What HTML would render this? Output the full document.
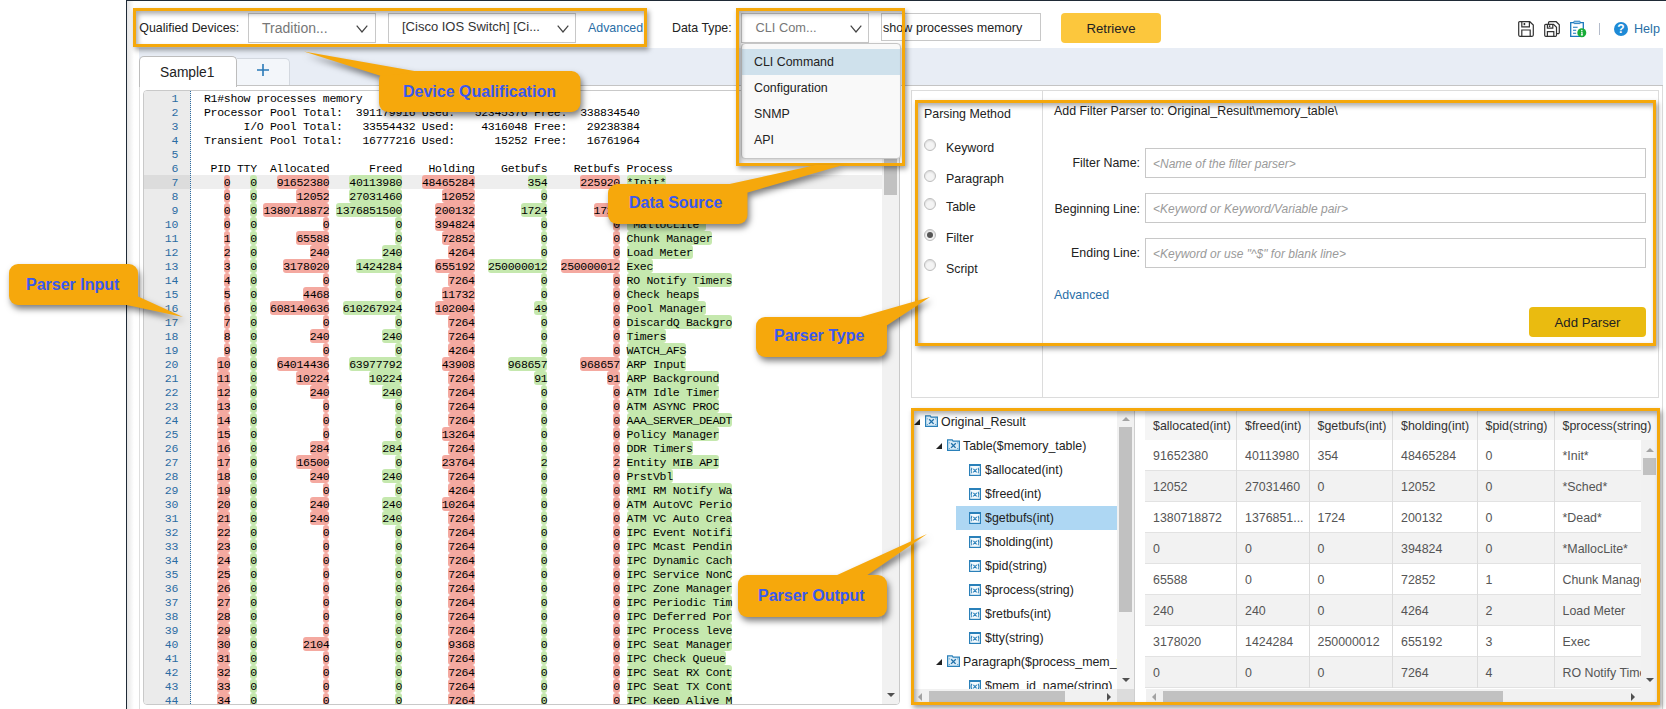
<!DOCTYPE html>
<html><head><meta charset="utf-8"><title>Parser</title>
<style>
html,body{margin:0;padding:0}
body{width:1666px;height:709px;overflow:hidden;background:#fff;position:relative;font-family:"Liberation Sans",sans-serif;font-size:12.4px;color:#222}
.abs{position:absolute}
.t{position:absolute;white-space:nowrap;line-height:16px}
.sel1{position:absolute;box-sizing:border-box;border:1px solid #c8c8c8;background:#fff;height:30px;top:13px}
.sel1 .v{position:absolute;top:5px;font-size:14px;line-height:18px;white-space:nowrap}
.obox{position:absolute;box-sizing:border-box;border:3px solid #f5a80b;box-shadow:2px 3px 5px rgba(0,0,0,.38), inset 2px 3px 5px rgba(0,0,0,.33);pointer-events:none}
.link{color:#2a6ea6}
#tabs{position:absolute;left:139px;top:48px;width:1524px;height:37px;background:#e8edf5;border-bottom:1px solid #c4c4c4}
#tab1{position:absolute;left:139px;top:56px;width:98px;height:31px;box-sizing:border-box;background:#fff;border:1px solid #bdbdbd;border-bottom:none;border-radius:5px 5px 0 0;font-size:13.8px;line-height:18px}
#tab2{position:absolute;left:237px;top:58px;width:53px;height:27px;box-sizing:border-box;background:#f3f6fa;border:1px solid #d3d8df;border-bottom:none;border-left:none;border-radius:0 5px 0 0}
#editor{position:absolute;left:143px;top:90px;width:757px;height:615px;box-sizing:border-box;border:1px solid #c9c9c9;border-radius:4px;background:#fff;overflow:hidden}
#gutter{position:absolute;left:0;top:0;width:46px;height:100%;background:#ebebeb;border-right:1px dotted #2b6ca3}
#code{position:absolute;left:0;top:1px;width:589px;height:100%;overflow:hidden;background:transparent;font-family:"Liberation Mono",monospace;font-size:11.5px;letter-spacing:-0.3px;line-height:14px;color:#000;white-space:pre}
.ln{position:relative;height:14px;padding-left:60px}
.ln b{position:absolute;left:0;top:0;width:34px;text-align:right;font-weight:normal;color:#2b6ca3}
.ln.cur{background:transparent}
.ln.cur b{background:transparent}
.ln i{font-style:normal;display:inline-block;height:14px;line-height:14px;vertical-align:top;position:relative;z-index:0}
.ln i:before{content:"";position:absolute;left:0;right:0;top:-1px;height:14px;border-radius:3px;z-index:-1}
.ln i.p:before{background:#f4a9a0}
.ln i.g:before{background:#c5e8ae}
.sb{position:absolute;background:#f1f1f1}
.th1{position:absolute;background:#c1c1c1}
.aru,.ard,.arl,.arr{position:absolute;width:0;height:0;border:4px solid transparent}
.aru{border-bottom:4px solid #505050;border-top:none}
.ard{border-top:4px solid #505050;border-bottom:none}
.arl{border-right:4px solid #505050;border-left:none}
.arr{border-left:4px solid #505050;border-right:none}
.aru.lt{border-bottom-color:#a3a3a3}
.arl.lt{border-right-color:#a3a3a3}
#rp{position:absolute;left:911px;top:90px;width:748px;height:308px;box-sizing:border-box;border:1px solid #dcdcdc;background:#fff}
.radio{position:absolute;width:12px;height:12px;box-sizing:border-box;border:1px solid #bdbdbd;border-radius:50%;background:#f4f4f4;box-shadow:inset 0 1px 2px rgba(0,0,0,.12)}
.radio.on:after{content:"";position:absolute;left:2px;top:2px;width:6px;height:6px;border-radius:50%;background:#555}
.inp{position:absolute;left:1145px;width:501px;height:30px;box-sizing:border-box;border:1px solid #c8c8c8;background:#fff}
.ph{position:absolute;left:7px;top:7px;font-style:italic;color:#9a9a9a;font-size:12px;line-height:16px;white-space:nowrap}
.btn{position:absolute;box-sizing:border-box;border-radius:4px;text-align:center;font-size:13.2px;color:#222}
#tree{position:absolute;left:914px;top:411px;width:203px;height:278px;overflow:hidden;background:#fff}
.tr{position:absolute;left:0;width:300px;height:24px}
.tt{position:absolute;top:3px;line-height:16px;white-space:nowrap;color:#222}
.ar{position:absolute;top:8px;width:0;height:0;border-left:6px solid transparent;border-bottom:6px solid #222}
.tsel{position:absolute;left:42px;top:-1px;width:161px;height:24px}
.tsel.sel{background:#aed7f3}
.ti{display:block}
#tbl{position:absolute;left:1145px;top:408px;width:512px;height:281px;overflow:hidden;background:#fff}
.thead{position:absolute;left:0;top:0;width:600px;height:32px;background:#f5f5f5;border-bottom:1px solid #ddd}
.th{position:absolute;top:0;height:32px;box-sizing:border-box;border-right:1px solid #dcdcdc;padding:9.5px 0 0 8px;line-height:16px;color:#333;white-space:nowrap;overflow:hidden}
.trow{position:absolute;left:0;width:600px;height:31px;background:#fff;box-sizing:border-box;border-bottom:1px solid #e2e2e2}
.trow.alt{background:#f2f2f2}
.td{position:absolute;top:0;height:31px;box-sizing:border-box;border-right:1px solid #dcdcdc;padding:7.5px 0 0 8px;line-height:16px;color:#555;white-space:nowrap;overflow:hidden}
.ct{position:absolute;font-weight:bold;font-size:16px;line-height:20px;color:#3a59ee;white-space:nowrap}
</style></head><body>
<!-- window edges -->
<div class="abs" style="left:127px;top:0;width:7px;height:709px;background:linear-gradient(90deg,rgba(0,0,0,.10),rgba(0,0,0,0))"></div>
<div class="abs" style="left:126px;top:0;width:1px;height:709px;background:#1f2a36"></div>
<div class="abs" style="left:126px;top:0;width:1540px;height:1px;background:#1f2a36"></div>
<div class="abs" style="left:139px;top:86px;width:1px;height:623px;background:#dedede"></div>
<div class="abs" style="left:1662px;top:48px;width:1px;height:661px;background:#dcdcdc"></div>

<!-- toolbar -->
<div class="t" style="left:139.3px;top:20px">Qualified Devices:</div>
<div class="sel1" style="left:248px;width:128px"><span class="v" style="left:13px;color:#777">Tradition...</span><svg style="position:absolute;left:107px;top:11px" width="12" height="8" viewBox="0 0 12 8"><path d="M.7.7L6 7 11.3.7" fill="none" stroke="#444" stroke-width="1.2"/></svg></div>
<div class="sel1" style="left:388px;width:188px"><span class="v" style="left:13px;top:4px;color:#333;font-size:13px">[Cisco IOS Switch] [Ci...</span><svg style="position:absolute;left:168px;top:11px" width="12" height="8" viewBox="0 0 12 8"><path d="M.7.7L6 7 11.3.7" fill="none" stroke="#444" stroke-width="1.2"/></svg></div>
<div class="t link" style="left:588px;top:20px">Advanced</div>
<div class="t" style="left:672px;top:20px">Data Type:</div>
<div class="sel1" style="left:741px;width:128px"><span class="v" style="left:13.5px;color:#777;font-size:12.8px">CLI Com...</span><svg style="position:absolute;left:108px;top:10.5px" width="12" height="8" viewBox="0 0 12 8"><path d="M.7.7L6 7 11.3.7" fill="none" stroke="#444" stroke-width="1.2"/></svg></div>
<div class="abs" style="left:881px;top:13px;width:160px;height:28px;box-sizing:border-box;border:1px solid #c8c8c8;background:#fff"><span class="t" style="left:1px;top:6px;font-size:12.6px">show processes memory</span></div>
<div class="btn" style="left:1061px;top:13px;width:100px;height:30px;background:#fcc73d;line-height:32px">Retrieve</div>

<!-- toolbar icons -->
<svg class="abs" style="left:1518px;top:21px" width="16" height="16" viewBox="0 0 16 16"><path d="M1.6.7h10.2l3.5 3.3v10.1a1.2 1.2 0 0 1-1.2 1.2H1.9A1.2 1.2 0 0 1 .7 14.1V1.6A.9.9 0 0 1 1.6.7z" fill="#fff" stroke="#333" stroke-width="1.2"/><path d="M3.8.9v5h7.6v-5M3.8 15.2V9h8.4v6.2" fill="none" stroke="#333" stroke-width="1.2"/><rect x="5.6" y="2" width="1.6" height="2.2" fill="#333"/></svg>
<svg class="abs" style="left:1544px;top:21px" width="16" height="16" viewBox="0 0 16 16"><path d="M4.5 3V1.8A1.1 1.1 0 0 1 5.6.7h6.6l3.1 3v7.8a1.1 1.1 0 0 1-1.1 1.1h-1.4" fill="none" stroke="#333" stroke-width="1.2"/><path d="M1.7 3.3h7.8l3 2.9v8a1.1 1.1 0 0 1-1.1 1.1H1.8A1.1 1.1 0 0 1 .7 14.2V4.3a1 1 0 0 1 1-1z" fill="#fff" stroke="#333" stroke-width="1.2"/><path d="M3.4 3.5v3.7h5.4V3.5M3.4 15.2v-4.6h6.4v4.6" fill="none" stroke="#333" stroke-width="1.2"/><rect x="4.8" y="4.3" width="1.5" height="1.7" fill="#333"/></svg>
<svg class="abs" style="left:1570px;top:20px" width="17" height="18" viewBox="0 0 17 18"><path d="M.7 2.7h12.6v13.6H.7z" fill="#fff" stroke="#1a78bd" stroke-width="1.3"/><rect x="3.8" y="1.2" width="6.4" height="2.4" rx=".6" fill="#9fcbea" stroke="#1a78bd" stroke-width=".9"/><path d="M3 7.3h4.6M3 10.3h3.2M3 13.3h3.2" stroke="#1a78bd" stroke-width="1.1"/><circle cx="11.8" cy="12.7" r="4.5" fill="#17ad38"/><path d="M11.8 10.6v.01" stroke="#fff" stroke-width="1.5" stroke-linecap="round"/><path d="M11.1 12.2h.9v2.6M10.9 14.9h2" stroke="#fff" stroke-width="1.1" fill="none"/></svg>
<div class="abs" style="left:1598.5px;top:23px;width:1px;height:12px;background:#b4bccb"></div>
<div class="abs" style="left:1614px;top:22px;width:14px;height:14px;border-radius:50%;background:#1e8ad6;color:#fff;font-weight:bold;font-size:12px;line-height:14px;text-align:center">?</div>
<div class="t link" style="left:1634px;top:21px;font-size:12.6px">Help</div>

<!-- tab strip -->
<div id="tabs"></div>
<div id="tab2"><svg class="abs" style="left:19px;top:4px" width="14" height="14" viewBox="0 0 14 14"><path d="M7 1v12M1 7h12" stroke="#2a7ab8" stroke-width="1.6"/></svg></div>
<div id="tab1"><span class="abs" style="left:20px;top:6.5px">Sample1</span></div>

<!-- editor -->
<div id="editor">
<div class="abs" style="left:47px;top:84px;width:700px;height:14px;background:#eeeeee"></div>
<div id="gutter"><div class="abs" style="left:0;top:84px;width:46px;height:14px;background:#dcdcdc"></div></div>
<div id="code"><div class="ln"><b>1</b>R1#show processes memory</div><div class="ln"><b>2</b>Processor Pool Total:  391179916 Used:   52345376 Free:  338834540</div><div class="ln"><b>3</b>      I/O Pool Total:   33554432 Used:    4316048 Free:   29238384</div><div class="ln"><b>4</b>Transient Pool Total:   16777216 Used:      15252 Free:   16761964</div><div class="ln"><b>5</b></div><div class="ln"><b>6</b> PID TTY  Allocated      Freed    Holding    Getbufs    Retbufs Process</div><div class="ln cur"><b>7</b>   <i class="p">0</i>   <i class="g">0</i>   <i class="p">91652380</i>   <i class="g">40113980</i>   <i class="p">48465284</i>        <i class="g">354</i>     <i class="p">225920</i> <i class="g">*Init*</i></div><div class="ln"><b>8</b>   <i class="p">0</i>   <i class="g">0</i>      <i class="p">12052</i>   <i class="g">27031460</i>      <i class="p">12052</i>          <i class="g">0</i>          <i class="p">0</i> <i class="g">*Sched*</i></div><div class="ln"><b>9</b>   <i class="p">0</i>   <i class="g">0</i> <i class="p">1380718872</i> <i class="g">1376851500</i>     <i class="p">200132</i>       <i class="g">1724</i>       <i class="p">1724</i> <i class="g">*Dead*</i></div><div class="ln"><b>10</b>   <i class="p">0</i>   <i class="g">0</i>          <i class="p">0</i>          <i class="g">0</i>     <i class="p">394824</i>          <i class="g">0</i>          <i class="p">0</i> <i class="g">*MallocLite*</i></div><div class="ln"><b>11</b>   <i class="p">1</i>   <i class="g">0</i>      <i class="p">65588</i>          <i class="g">0</i>      <i class="p">72852</i>          <i class="g">0</i>          <i class="p">0</i> <i class="g">Chunk Manager</i></div><div class="ln"><b>12</b>   <i class="p">2</i>   <i class="g">0</i>        <i class="p">240</i>        <i class="g">240</i>       <i class="p">4264</i>          <i class="g">0</i>          <i class="p">0</i> <i class="g">Load Meter</i></div><div class="ln"><b>13</b>   <i class="p">3</i>   <i class="g">0</i>    <i class="p">3178020</i>    <i class="g">1424284</i>     <i class="p">655192</i>  <i class="g">250000012</i>  <i class="p">250000012</i> <i class="g">Exec</i></div><div class="ln"><b>14</b>   <i class="p">4</i>   <i class="g">0</i>          <i class="p">0</i>          <i class="g">0</i>       <i class="p">7264</i>          <i class="g">0</i>          <i class="p">0</i> <i class="g">RO Notify Timers</i></div><div class="ln"><b>15</b>   <i class="p">5</i>   <i class="g">0</i>       <i class="p">4468</i>          <i class="g">0</i>      <i class="p">11732</i>          <i class="g">0</i>          <i class="p">0</i> <i class="g">Check heaps</i></div><div class="ln"><b>16</b>   <i class="p">6</i>   <i class="g">0</i>  <i class="p">608140636</i>  <i class="g">610267924</i>     <i class="p">102004</i>         <i class="g">49</i>          <i class="p">0</i> <i class="g">Pool Manager</i></div><div class="ln"><b>17</b>   <i class="p">7</i>   <i class="g">0</i>          <i class="p">0</i>          <i class="g">0</i>       <i class="p">7264</i>          <i class="g">0</i>          <i class="p">0</i> <i class="g">DiscardQ Backgro</i></div><div class="ln"><b>18</b>   <i class="p">8</i>   <i class="g">0</i>        <i class="p">240</i>        <i class="g">240</i>       <i class="p">7264</i>          <i class="g">0</i>          <i class="p">0</i> <i class="g">Timers</i></div><div class="ln"><b>19</b>   <i class="p">9</i>   <i class="g">0</i>          <i class="p">0</i>          <i class="g">0</i>       <i class="p">4264</i>          <i class="g">0</i>          <i class="p">0</i> <i class="g">WATCH_AFS</i></div><div class="ln"><b>20</b>  <i class="p">10</i>   <i class="g">0</i>   <i class="p">64014436</i>   <i class="g">63977792</i>      <i class="p">43908</i>     <i class="g">968657</i>     <i class="p">968657</i> <i class="g">ARP Input</i></div><div class="ln"><b>21</b>  <i class="p">11</i>   <i class="g">0</i>      <i class="p">10224</i>      <i class="g">10224</i>       <i class="p">7264</i>         <i class="g">91</i>         <i class="p">91</i> <i class="g">ARP Background</i></div><div class="ln"><b>22</b>  <i class="p">12</i>   <i class="g">0</i>        <i class="p">240</i>        <i class="g">240</i>       <i class="p">7264</i>          <i class="g">0</i>          <i class="p">0</i> <i class="g">ATM Idle Timer</i></div><div class="ln"><b>23</b>  <i class="p">13</i>   <i class="g">0</i>          <i class="p">0</i>          <i class="g">0</i>       <i class="p">7264</i>          <i class="g">0</i>          <i class="p">0</i> <i class="g">ATM ASYNC PROC</i></div><div class="ln"><b>24</b>  <i class="p">14</i>   <i class="g">0</i>          <i class="p">0</i>          <i class="g">0</i>       <i class="p">7264</i>          <i class="g">0</i>          <i class="p">0</i> <i class="g">AAA_SERVER_DEADT</i></div><div class="ln"><b>25</b>  <i class="p">15</i>   <i class="g">0</i>          <i class="p">0</i>          <i class="g">0</i>      <i class="p">13264</i>          <i class="g">0</i>          <i class="p">0</i> <i class="g">Policy Manager</i></div><div class="ln"><b>26</b>  <i class="p">16</i>   <i class="g">0</i>        <i class="p">284</i>        <i class="g">284</i>       <i class="p">7264</i>          <i class="g">0</i>          <i class="p">0</i> <i class="g">DDR Timers</i></div><div class="ln"><b>27</b>  <i class="p">17</i>   <i class="g">0</i>      <i class="p">16500</i>          <i class="g">0</i>      <i class="p">23764</i>          <i class="g">2</i>          <i class="p">2</i> <i class="g">Entity MIB API</i></div><div class="ln"><b>28</b>  <i class="p">18</i>   <i class="g">0</i>        <i class="p">240</i>        <i class="g">240</i>       <i class="p">7264</i>          <i class="g">0</i>          <i class="p">0</i> <i class="g">PrstVbl</i></div><div class="ln"><b>29</b>  <i class="p">19</i>   <i class="g">0</i>          <i class="p">0</i>          <i class="g">0</i>       <i class="p">4264</i>          <i class="g">0</i>          <i class="p">0</i> <i class="g">RMI RM Notify Wa</i></div><div class="ln"><b>30</b>  <i class="p">20</i>   <i class="g">0</i>        <i class="p">240</i>        <i class="g">240</i>      <i class="p">10264</i>          <i class="g">0</i>          <i class="p">0</i> <i class="g">ATM AutoVC Perio</i></div><div class="ln"><b>31</b>  <i class="p">21</i>   <i class="g">0</i>        <i class="p">240</i>        <i class="g">240</i>       <i class="p">7264</i>          <i class="g">0</i>          <i class="p">0</i> <i class="g">ATM VC Auto Crea</i></div><div class="ln"><b>32</b>  <i class="p">22</i>   <i class="g">0</i>          <i class="p">0</i>          <i class="g">0</i>       <i class="p">7264</i>          <i class="g">0</i>          <i class="p">0</i> <i class="g">IPC Event Notifi</i></div><div class="ln"><b>33</b>  <i class="p">23</i>   <i class="g">0</i>          <i class="p">0</i>          <i class="g">0</i>       <i class="p">7264</i>          <i class="g">0</i>          <i class="p">0</i> <i class="g">IPC Mcast Pendin</i></div><div class="ln"><b>34</b>  <i class="p">24</i>   <i class="g">0</i>          <i class="p">0</i>          <i class="g">0</i>       <i class="p">7264</i>          <i class="g">0</i>          <i class="p">0</i> <i class="g">IPC Dynamic Cach</i></div><div class="ln"><b>35</b>  <i class="p">25</i>   <i class="g">0</i>          <i class="p">0</i>          <i class="g">0</i>       <i class="p">7264</i>          <i class="g">0</i>          <i class="p">0</i> <i class="g">IPC Service NonC</i></div><div class="ln"><b>36</b>  <i class="p">26</i>   <i class="g">0</i>          <i class="p">0</i>          <i class="g">0</i>       <i class="p">7264</i>          <i class="g">0</i>          <i class="p">0</i> <i class="g">IPC Zone Manager</i></div><div class="ln"><b>37</b>  <i class="p">27</i>   <i class="g">0</i>          <i class="p">0</i>          <i class="g">0</i>       <i class="p">7264</i>          <i class="g">0</i>          <i class="p">0</i> <i class="g">IPC Periodic Tim</i></div><div class="ln"><b>38</b>  <i class="p">28</i>   <i class="g">0</i>          <i class="p">0</i>          <i class="g">0</i>       <i class="p">7264</i>          <i class="g">0</i>          <i class="p">0</i> <i class="g">IPC Deferred Por</i></div><div class="ln"><b>39</b>  <i class="p">29</i>   <i class="g">0</i>          <i class="p">0</i>          <i class="g">0</i>       <i class="p">7264</i>          <i class="g">0</i>          <i class="p">0</i> <i class="g">IPC Process leve</i></div><div class="ln"><b>40</b>  <i class="p">30</i>   <i class="g">0</i>       <i class="p">2104</i>          <i class="g">0</i>       <i class="p">9368</i>          <i class="g">0</i>          <i class="p">0</i> <i class="g">IPC Seat Manager</i></div><div class="ln"><b>41</b>  <i class="p">31</i>   <i class="g">0</i>          <i class="p">0</i>          <i class="g">0</i>       <i class="p">7264</i>          <i class="g">0</i>          <i class="p">0</i> <i class="g">IPC Check Queue</i></div><div class="ln"><b>42</b>  <i class="p">32</i>   <i class="g">0</i>          <i class="p">0</i>          <i class="g">0</i>       <i class="p">7264</i>          <i class="g">0</i>          <i class="p">0</i> <i class="g">IPC Seat RX Cont</i></div><div class="ln"><b>43</b>  <i class="p">33</i>   <i class="g">0</i>          <i class="p">0</i>          <i class="g">0</i>       <i class="p">7264</i>          <i class="g">0</i>          <i class="p">0</i> <i class="g">IPC Seat TX Cont</i></div><div class="ln"><b>44</b>  <i class="p">34</i>   <i class="g">0</i>          <i class="p">0</i>          <i class="g">0</i>       <i class="p">7264</i>          <i class="g">0</i>          <i class="p">0</i> <i class="g">IPC Keep Alive M</i></div></div>
<div class="sb" style="left:738px;top:0;width:17px;height:613px"></div>
<div class="th1" style="left:740px;top:17px;width:13px;height:87px"></div>
<div class="aru lt" style="left:742.5px;top:6px"></div>
<div class="ard" style="left:742.5px;top:602px"></div>
</div>

<!-- dropdown list -->
<div class="abs" style="left:741px;top:43px;width:160px;height:116px;box-sizing:border-box;border:1px solid #c6c6c6;border-radius:4px;background:#f9f9f9;box-shadow:0 2px 4px rgba(0,0,0,.2)">
<div class="abs" style="left:0;top:5px;width:158px;height:26px;background:#cfe1ec"></div>
<span class="t" style="left:12px;top:10px">CLI Command</span>
<span class="t" style="left:12px;top:36px">Configuration</span>
<span class="t" style="left:12px;top:62px">SNMP</span>
<span class="t" style="left:12px;top:88px">API</span>
</div>

<!-- right panel -->
<div id="rp"><div class="abs" style="left:130px;top:0;width:1px;height:306px;background:#dcdcdc"></div></div>
<div class="t" style="left:924px;top:106px">Parsing Method</div>
<div class="radio" style="left:924px;top:139px"></div><div class="t" style="left:946px;top:140px">Keyword</div>
<div class="radio" style="left:924px;top:170px"></div><div class="t" style="left:946px;top:171px">Paragraph</div>
<div class="radio" style="left:924px;top:198px"></div><div class="t" style="left:946px;top:199px">Table</div>
<div class="radio on" style="left:924px;top:229px"></div><div class="t" style="left:946px;top:230px">Filter</div>
<div class="radio" style="left:924px;top:259px"></div><div class="t" style="left:946px;top:261px">Script</div>
<div class="t" style="left:1054px;top:103px">Add Filter Parser to: Original_Result\memory_table\</div>
<div class="t" style="left:1040px;width:100px;text-align:right;top:155px">Filter Name:</div>
<div class="t" style="left:1040px;width:100px;text-align:right;top:200.5px">Beginning Line:</div>
<div class="t" style="left:1040px;width:100px;text-align:right;top:245px">Ending Line:</div>
<div class="inp" style="top:148px"><span class="ph">&lt;Name of the filter parser&gt;</span></div>
<div class="inp" style="top:193px"><span class="ph">&lt;Keyword or Keyword/Variable pair&gt;</span></div>
<div class="inp" style="top:238px"><span class="ph">&lt;Keyword or use "^$" for blank line&gt;</span></div>
<div class="t link" style="left:1054px;top:287px">Advanced</div>
<div class="btn" style="left:1529px;top:307px;width:117px;height:30px;background:#eabb10;line-height:32px">Add Parser</div>

<!-- output: tree -->
<div id="tree">
<div class="tr" style="top:0px"><span class="ar" style="left:0px"></span><span style="position:absolute;left:11px;top:4px"><svg class="ti" width="13" height="12" viewBox="0 0 13 12"><path d="M.6 11.4V.8h4.6l.9 1.3h6.3v9.3z" fill="#d9ebf7" stroke="#2a80b9" stroke-width="1.2"/><path d="M4.2 4.3l4.4 4.6M8.8 4.3l-4.8 4.6" fill="none" stroke="#1f6fa8" stroke-width="1.3"/><path d="M2.3 3.9v.01M10.7 3.9v.01M2.3 9.6v.01M10.7 9.6v.01" stroke="#2a80b9" stroke-width="1" stroke-linecap="round"/></svg></span><span class="tt" style="left:27px">Original_Result</span></div>
<div class="tr" style="top:24px"><span class="ar" style="left:22px"></span><span style="position:absolute;left:33px;top:4px"><svg class="ti" width="13" height="12" viewBox="0 0 13 12"><path d="M.6 11.4V.8h4.6l.9 1.3h6.3v9.3z" fill="#d9ebf7" stroke="#2a80b9" stroke-width="1.2"/><path d="M4.2 4.3l4.4 4.6M8.8 4.3l-4.8 4.6" fill="none" stroke="#1f6fa8" stroke-width="1.3"/><path d="M2.3 3.9v.01M10.7 3.9v.01M2.3 9.6v.01M10.7 9.6v.01" stroke="#2a80b9" stroke-width="1" stroke-linecap="round"/></svg></span><span class="tt" style="left:49px">Table($memory_table)</span></div>
<div class="tr" style="top:48px"><div class="tsel"></div><span style="position:absolute;left:55px;top:5px"><svg class="ti" width="12" height="12" viewBox="0 0 12 12"><rect x=".6" y=".6" width="10.8" height="10.8" fill="#f3f9fd" stroke="#2a80b9" stroke-width="1.2"/><rect x=".6" y=".3" width="10.8" height="1.7" fill="#2a80b9"/><path d="M2.9 3.9q-1.6 2.7 0 5.4M9.1 3.9q1.6 2.7 0 5.4M4.4 4.9l3.2 3.5M7.8 4.9l-3.6 3.5" fill="none" stroke="#2a80b9" stroke-width="1.1"/></svg></span><span class="tt" style="left:71px">$allocated(int)</span></div>
<div class="tr" style="top:72px"><div class="tsel"></div><span style="position:absolute;left:55px;top:5px"><svg class="ti" width="12" height="12" viewBox="0 0 12 12"><rect x=".6" y=".6" width="10.8" height="10.8" fill="#f3f9fd" stroke="#2a80b9" stroke-width="1.2"/><rect x=".6" y=".3" width="10.8" height="1.7" fill="#2a80b9"/><path d="M2.9 3.9q-1.6 2.7 0 5.4M9.1 3.9q1.6 2.7 0 5.4M4.4 4.9l3.2 3.5M7.8 4.9l-3.6 3.5" fill="none" stroke="#2a80b9" stroke-width="1.1"/></svg></span><span class="tt" style="left:71px">$freed(int)</span></div>
<div class="tr" style="top:96px"><div class="tsel sel"></div><span style="position:absolute;left:55px;top:5px"><svg class="ti" width="12" height="12" viewBox="0 0 12 12"><rect x=".6" y=".6" width="10.8" height="10.8" fill="#f3f9fd" stroke="#2a80b9" stroke-width="1.2"/><rect x=".6" y=".3" width="10.8" height="1.7" fill="#2a80b9"/><path d="M2.9 3.9q-1.6 2.7 0 5.4M9.1 3.9q1.6 2.7 0 5.4M4.4 4.9l3.2 3.5M7.8 4.9l-3.6 3.5" fill="none" stroke="#2a80b9" stroke-width="1.1"/></svg></span><span class="tt" style="left:71px">$getbufs(int)</span></div>
<div class="tr" style="top:120px"><div class="tsel"></div><span style="position:absolute;left:55px;top:5px"><svg class="ti" width="12" height="12" viewBox="0 0 12 12"><rect x=".6" y=".6" width="10.8" height="10.8" fill="#f3f9fd" stroke="#2a80b9" stroke-width="1.2"/><rect x=".6" y=".3" width="10.8" height="1.7" fill="#2a80b9"/><path d="M2.9 3.9q-1.6 2.7 0 5.4M9.1 3.9q1.6 2.7 0 5.4M4.4 4.9l3.2 3.5M7.8 4.9l-3.6 3.5" fill="none" stroke="#2a80b9" stroke-width="1.1"/></svg></span><span class="tt" style="left:71px">$holding(int)</span></div>
<div class="tr" style="top:144px"><div class="tsel"></div><span style="position:absolute;left:55px;top:5px"><svg class="ti" width="12" height="12" viewBox="0 0 12 12"><rect x=".6" y=".6" width="10.8" height="10.8" fill="#f3f9fd" stroke="#2a80b9" stroke-width="1.2"/><rect x=".6" y=".3" width="10.8" height="1.7" fill="#2a80b9"/><path d="M2.9 3.9q-1.6 2.7 0 5.4M9.1 3.9q1.6 2.7 0 5.4M4.4 4.9l3.2 3.5M7.8 4.9l-3.6 3.5" fill="none" stroke="#2a80b9" stroke-width="1.1"/></svg></span><span class="tt" style="left:71px">$pid(string)</span></div>
<div class="tr" style="top:168px"><div class="tsel"></div><span style="position:absolute;left:55px;top:5px"><svg class="ti" width="12" height="12" viewBox="0 0 12 12"><rect x=".6" y=".6" width="10.8" height="10.8" fill="#f3f9fd" stroke="#2a80b9" stroke-width="1.2"/><rect x=".6" y=".3" width="10.8" height="1.7" fill="#2a80b9"/><path d="M2.9 3.9q-1.6 2.7 0 5.4M9.1 3.9q1.6 2.7 0 5.4M4.4 4.9l3.2 3.5M7.8 4.9l-3.6 3.5" fill="none" stroke="#2a80b9" stroke-width="1.1"/></svg></span><span class="tt" style="left:71px">$process(string)</span></div>
<div class="tr" style="top:192px"><div class="tsel"></div><span style="position:absolute;left:55px;top:5px"><svg class="ti" width="12" height="12" viewBox="0 0 12 12"><rect x=".6" y=".6" width="10.8" height="10.8" fill="#f3f9fd" stroke="#2a80b9" stroke-width="1.2"/><rect x=".6" y=".3" width="10.8" height="1.7" fill="#2a80b9"/><path d="M2.9 3.9q-1.6 2.7 0 5.4M9.1 3.9q1.6 2.7 0 5.4M4.4 4.9l3.2 3.5M7.8 4.9l-3.6 3.5" fill="none" stroke="#2a80b9" stroke-width="1.1"/></svg></span><span class="tt" style="left:71px">$retbufs(int)</span></div>
<div class="tr" style="top:216px"><div class="tsel"></div><span style="position:absolute;left:55px;top:5px"><svg class="ti" width="12" height="12" viewBox="0 0 12 12"><rect x=".6" y=".6" width="10.8" height="10.8" fill="#f3f9fd" stroke="#2a80b9" stroke-width="1.2"/><rect x=".6" y=".3" width="10.8" height="1.7" fill="#2a80b9"/><path d="M2.9 3.9q-1.6 2.7 0 5.4M9.1 3.9q1.6 2.7 0 5.4M4.4 4.9l3.2 3.5M7.8 4.9l-3.6 3.5" fill="none" stroke="#2a80b9" stroke-width="1.1"/></svg></span><span class="tt" style="left:71px">$tty(string)</span></div>
<div class="tr" style="top:240px"><span class="ar" style="left:22px"></span><span style="position:absolute;left:33px;top:4px"><svg class="ti" width="13" height="12" viewBox="0 0 13 12"><path d="M.6 11.4V.8h4.6l.9 1.3h6.3v9.3z" fill="#d9ebf7" stroke="#2a80b9" stroke-width="1.2"/><path d="M4.2 4.3l4.4 4.6M8.8 4.3l-4.8 4.6" fill="none" stroke="#1f6fa8" stroke-width="1.3"/><path d="M2.3 3.9v.01M10.7 3.9v.01M2.3 9.6v.01M10.7 9.6v.01" stroke="#2a80b9" stroke-width="1" stroke-linecap="round"/></svg></span><span class="tt" style="left:49px">Paragraph($process_mem_pool)</span></div>
<div class="tr" style="top:264px"><div class="tsel"></div><span style="position:absolute;left:55px;top:5px"><svg class="ti" width="12" height="12" viewBox="0 0 12 12"><rect x=".6" y=".6" width="10.8" height="10.8" fill="#f3f9fd" stroke="#2a80b9" stroke-width="1.2"/><rect x=".6" y=".3" width="10.8" height="1.7" fill="#2a80b9"/><path d="M2.9 3.9q-1.6 2.7 0 5.4M9.1 3.9q1.6 2.7 0 5.4M4.4 4.9l3.2 3.5M7.8 4.9l-3.6 3.5" fill="none" stroke="#2a80b9" stroke-width="1.1"/></svg></span><span class="tt" style="left:71px">$mem_id_name(string)</span></div>
</div>
<div class="sb" style="left:1117px;top:411px;width:17px;height:278px"></div>
<div class="th1" style="left:1119px;top:427px;width:13px;height:185px"></div>
<div class="aru lt" style="left:1121.5px;top:417px"></div>
<div class="ard" style="left:1121.5px;top:678px"></div>
<div class="sb" style="left:914px;top:689px;width:203px;height:13px"></div>
<div class="abs" style="left:1117px;top:689px;width:17px;height:13px;background:#dcdcdc"></div>
<div class="th1" style="left:929px;top:691px;width:136px;height:11px"></div>
<div class="arl lt" style="left:918px;top:693px"></div>
<div class="arr" style="left:1107px;top:693px"></div>
<div class="abs" style="left:1134px;top:411px;width:1px;height:291px;background:#cfcfcf"></div>
<div class="abs" style="left:1145px;top:411px;width:1px;height:278px;background:#dddddd"></div>

<!-- output: table -->
<div id="tbl">
<div class="thead"><div class="th" style="left:0px;width:92px">$allocated(int)</div><div class="th" style="left:92px;width:72.5px">$freed(int)</div><div class="th" style="left:164.5px;width:83.5px">$getbufs(int)</div><div class="th" style="left:248px;width:84.5px">$holding(int)</div><div class="th" style="left:332.5px;width:77.0px">$pid(string)</div><div class="th" style="left:409.5px;width:145.5px">$process(string)</div></div>
<div class="trow" style="top:32px"><div class="td" style="left:0px;width:92px">91652380</div><div class="td" style="left:92px;width:72.5px">40113980</div><div class="td" style="left:164.5px;width:83.5px">354</div><div class="td" style="left:248px;width:84.5px">48465284</div><div class="td" style="left:332.5px;width:77.0px">0</div><div class="td" style="left:409.5px;width:145.5px">*Init*</div></div>
<div class="trow alt" style="top:63px"><div class="td" style="left:0px;width:92px">12052</div><div class="td" style="left:92px;width:72.5px">27031460</div><div class="td" style="left:164.5px;width:83.5px">0</div><div class="td" style="left:248px;width:84.5px">12052</div><div class="td" style="left:332.5px;width:77.0px">0</div><div class="td" style="left:409.5px;width:145.5px">*Sched*</div></div>
<div class="trow" style="top:94px"><div class="td" style="left:0px;width:92px">1380718872</div><div class="td" style="left:92px;width:72.5px">1376851...</div><div class="td" style="left:164.5px;width:83.5px">1724</div><div class="td" style="left:248px;width:84.5px">200132</div><div class="td" style="left:332.5px;width:77.0px">0</div><div class="td" style="left:409.5px;width:145.5px">*Dead*</div></div>
<div class="trow alt" style="top:125px"><div class="td" style="left:0px;width:92px">0</div><div class="td" style="left:92px;width:72.5px">0</div><div class="td" style="left:164.5px;width:83.5px">0</div><div class="td" style="left:248px;width:84.5px">394824</div><div class="td" style="left:332.5px;width:77.0px">0</div><div class="td" style="left:409.5px;width:145.5px">*MallocLite*</div></div>
<div class="trow" style="top:156px"><div class="td" style="left:0px;width:92px">65588</div><div class="td" style="left:92px;width:72.5px">0</div><div class="td" style="left:164.5px;width:83.5px">0</div><div class="td" style="left:248px;width:84.5px">72852</div><div class="td" style="left:332.5px;width:77.0px">1</div><div class="td" style="left:409.5px;width:145.5px">Chunk Manager</div></div>
<div class="trow alt" style="top:187px"><div class="td" style="left:0px;width:92px">240</div><div class="td" style="left:92px;width:72.5px">240</div><div class="td" style="left:164.5px;width:83.5px">0</div><div class="td" style="left:248px;width:84.5px">4264</div><div class="td" style="left:332.5px;width:77.0px">2</div><div class="td" style="left:409.5px;width:145.5px">Load Meter</div></div>
<div class="trow" style="top:218px"><div class="td" style="left:0px;width:92px">3178020</div><div class="td" style="left:92px;width:72.5px">1424284</div><div class="td" style="left:164.5px;width:83.5px">250000012</div><div class="td" style="left:248px;width:84.5px">655192</div><div class="td" style="left:332.5px;width:77.0px">3</div><div class="td" style="left:409.5px;width:145.5px">Exec</div></div>
<div class="trow alt" style="top:249px"><div class="td" style="left:0px;width:92px">0</div><div class="td" style="left:92px;width:72.5px">0</div><div class="td" style="left:164.5px;width:83.5px">0</div><div class="td" style="left:248px;width:84.5px">7264</div><div class="td" style="left:332.5px;width:77.0px">4</div><div class="td" style="left:409.5px;width:145.5px">RO Notify Timers</div></div>
</div>
<div class="sb" style="left:1641px;top:440px;width:17px;height:249px"></div>
<div class="th1" style="left:1643px;top:458px;width:13px;height:17px"></div>
<div class="aru lt" style="left:1645.5px;top:448px"></div>
<div class="ard" style="left:1645.5px;top:678px"></div>
<div class="sb" style="left:1146px;top:689px;width:512px;height:13px"></div>
<div class="th1" style="left:1163px;top:691px;width:340px;height:11px"></div>
<div class="arl lt" style="left:1152px;top:693px"></div>
<div class="arr" style="left:1631px;top:693px"></div>

<!-- orange highlight boxes -->
<div class="obox" style="left:133px;top:8px;width:514px;height:39px"></div>
<div class="obox" style="left:736px;top:8px;width:169px;height:158px"></div>
<div class="obox" style="left:915px;top:100px;width:741px;height:246px"></div>
<div class="obox" style="left:911px;top:408px;width:749px;height:297px"></div>

<!-- callouts -->
<svg class="abs" style="left:0;top:0;filter:drop-shadow(2px 4px 3px rgba(0,0,0,.5))" width="1666" height="709" viewBox="0 0 1666 709" fill="#f6a80c">
<rect x="379" y="71" width="201.5" height="41" rx="9" ry="9"/><polygon points="304,51.5 381,76 420,72"/>
<rect x="608" y="184" width="139.5" height="40" rx="9" ry="9"/><polygon points="725,185 816,165 843,165 746,193"/>
<rect x="9" y="264" width="129" height="41" rx="9" ry="9"/><polygon points="183,317 122,304 137,296"/>
<rect x="756" y="317" width="131" height="40" rx="9" ry="9"/><polygon points="930,297 857,318 886,326"/>
<rect x="738" y="575" width="149" height="42" rx="9" ry="9"/><polygon points="927,534 835,576 866,576"/>
</svg>
<div class="ct" style="left:403px;top:82px">Device Qualification</div>
<div class="ct" style="left:629px;top:193px">Data Source</div>
<div class="ct" style="left:26px;top:275px">Parser Input</div>
<div class="ct" style="left:774px;top:326px">Parser Type</div>
<div class="ct" style="left:758px;top:586px">Parser Output</div>
</body></html>
